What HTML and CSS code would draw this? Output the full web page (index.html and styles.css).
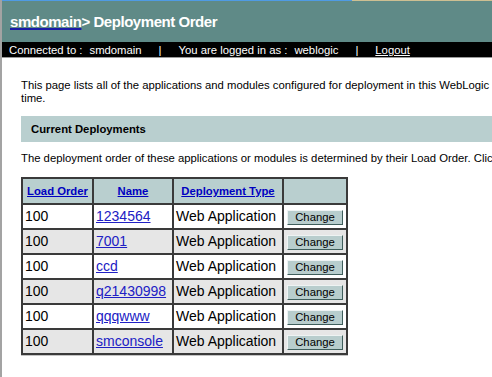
FILE: index.html
```html
<!DOCTYPE html>
<html lang="en">
<head>
<meta charset="utf-8">
<title>Deployment Order</title>
<link rel="stylesheet" href="styles.css">
</head>
<body>
<div class="topline"></div>
<header class="banner">
  <h1 class="title"><a class="crumb" href="#">smdomain</a>&gt; Deployment Order</h1>
</header>
<div class="statusbar">
  <span>Connected to :<span class="val">smdomain</span></span>
  <span class="sep">|</span>
  <span>You are logged in as :<span class="val">weblogic</span></span>
  <span class="sep">|</span>
  <a class="logout" href="#">Logout</a>
</div>
<main class="content">
  <p class="intro">This page lists all of the applications and modules configured for deployment in this WebLogic Server domain, and the order in which they are deployed at server startup<br>time.</p>
  <div class="section-bar">Current Deployments</div>
  <p class="note">The deployment order of these applications or modules is determined by their Load Order. Click on a column heading to sort the list.</p>
  <table class="deploy">
    <colgroup>
      <col class="c-order"><col class="c-name"><col class="c-type"><col class="c-action">
    </colgroup>
    <thead>
      <tr><th><a href="#">Load Order</a></th><th><a href="#">Name</a></th><th><a href="#">Deployment Type</a></th><th></th></tr>
    </thead>
    <tbody>
      <tr><td>100</td><td><a href="#">1234564</a></td><td>Web Application</td><td class="act"><button class="btn">Change</button></td></tr>
      <tr class="alt"><td>100</td><td><a href="#">7001</a></td><td>Web Application</td><td class="act"><button class="btn">Change</button></td></tr>
      <tr><td>100</td><td><a href="#">ccd</a></td><td>Web Application</td><td class="act"><button class="btn">Change</button></td></tr>
      <tr class="alt"><td>100</td><td><a href="#">q21430998</a></td><td>Web Application</td><td class="act"><button class="btn">Change</button></td></tr>
      <tr><td>100</td><td><a href="#">qqqwww</a></td><td>Web Application</td><td class="act"><button class="btn">Change</button></td></tr>
      <tr class="alt"><td>100</td><td><a href="#">smconsole</a></td><td>Web Application</td><td class="act"><button class="btn">Change</button></td></tr>
    </tbody>
  </table>
</main>
</body>
</html>
```
FILE: styles.css
```css
html {
  overflow: hidden;
}
body {
  margin: 0;
  min-height: 377px;
  border-left: 2px solid #a3a3a3;
  font-family: "Liberation Sans", Arial, sans-serif;
  color: #000;
  background: #fff;
}
.topline {
  height: 1px;
  background: linear-gradient(to right, #4f9be4 0, #4f9be4 350px, #cdbf92 350px);
}
.banner {
  background: #5f8a87;
  height: 41px;
  box-sizing: border-box;
  padding: 13px 0 0 8px;
}
.title {
  margin: 0;
  font-size: 15px;
  letter-spacing: -0.45px;
  line-height: 16px;
  font-weight: bold;
  color: #fff;
  white-space: nowrap;
}
.crumb {
  color: #fff;
  text-decoration: underline;
  text-decoration-color: #1a1aa6;
  text-decoration-thickness: 2px;
}
.statusbar {
  background: #000;
  color: #fff;
  height: 14px;
  padding: 1px 0 0 7px;
  line-height: 14px;
  font-size: 11.3px;
  display: flex;
  gap: 17px;
  white-space: nowrap;
  border-bottom: 1px solid #9a9a9a;
  box-sizing: content-box;
}
.statusbar .val {
  margin-left: 7px;
}
.logout {
  color: #fff;
  text-decoration: underline;
}
.content {
  padding: 21px 0 0 19px;
}
.intro, .note {
  margin: 0;
  font-size: 11.3px;
  line-height: 13px;
  white-space: nowrap;
}
.section-bar {
  margin: 11px 0 10px;
  height: 26px;
  line-height: 26px;
  padding-left: 10px;
  background: #b9cfcf;
  font-size: 11.3px;
  font-weight: bold;
}
.deploy {
  margin-top: 12px;
  table-layout: fixed;
  width: 327px;
  border-collapse: separate;
  border-spacing: 2px;
  background: #3a3a3a;
  box-shadow: 0 1px 0 #c4c4c4;
}
.c-order { width: 69px; }
.c-name { width: 78px; }
.c-type { width: 108px; }
.c-action { width: 62px; }
.deploy th {
  background: #b9cfcf;
  height: 24px;
  padding: 0;
  text-align: center;
  font-size: 11.3px;
  font-weight: bold;
}
.deploy th a {
  color: #0000c0;
  text-decoration: underline;
}
.deploy td {
  background: #fff;
  height: 21px;
  padding: 0 2px 2px;
  font-size: 14px;
  white-space: nowrap;
  overflow: hidden;
}
.deploy tr.alt td {
  background: #e6e6e6;
}
.deploy td a {
  color: #2020c4;
  text-decoration: underline;
}
.deploy td.act {
  text-align: center;
  padding: 0;
  height: 23px;
}
.btn {
  display: inline-block;
  vertical-align: middle;
  width: 56px;
  height: 15px;
  padding: 0;
  box-sizing: border-box;
  background: #b8cdcd;
  border: 1px solid;
  border-color: #eef3f3 #3f5e5c #3f5e5c #eef3f3;
  font-family: "Liberation Sans", Arial, sans-serif;
  font-size: 11.3px;
  line-height: 13px;
  color: #000;
}
```
